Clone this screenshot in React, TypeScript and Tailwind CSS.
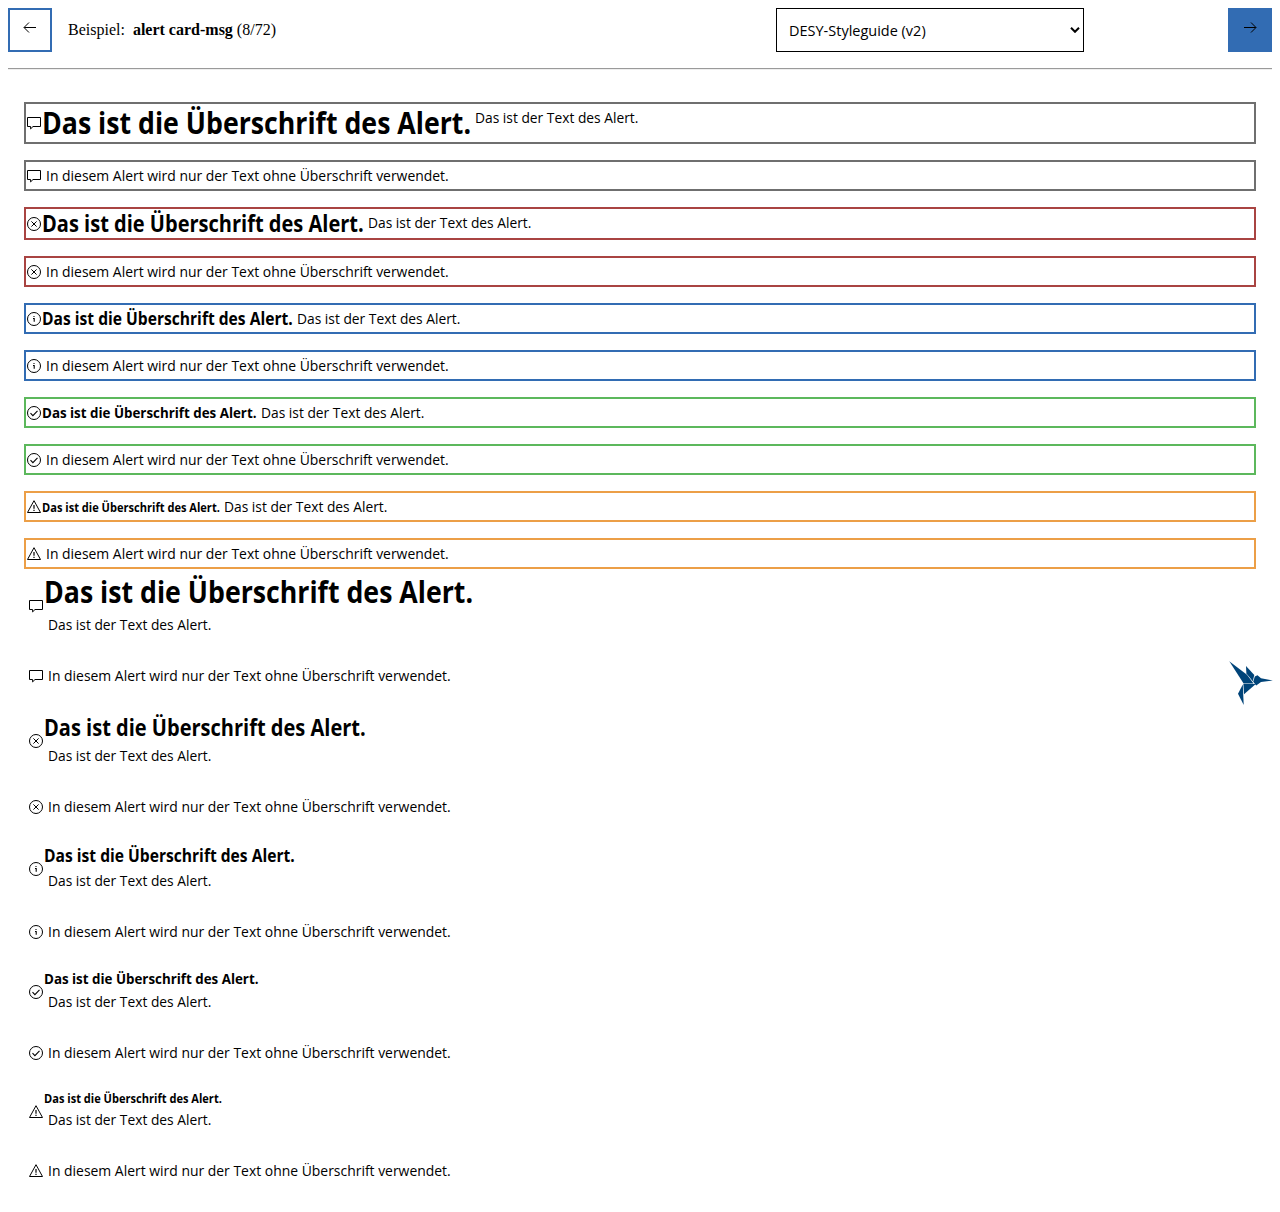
type Kind = 'note' | 'error' | 'info' | 'success' | 'warning';

const HEADING = 'Das ist die Überschrift des Alert.';
const TEXT = 'Das ist der Text des Alert.';
const TEXT_ONLY = 'In diesem Alert wird nur der Text ohne Überschrift verwendet.';

const alerts: {
  kind: Kind;
  border: string;
  height: string;
  size: string;
  line: string;
}[] = [
  { kind: 'note', border: 'border-[#6f6f6f]', height: 'h-[42px]', size: 'text-[30px]', line: 'h-[38.4px] leading-[37px] w-[429px]' },
  { kind: 'error', border: 'border-[#a94442]', height: 'h-[33px]', size: 'text-[22.5px]', line: 'h-[28.8px] leading-[30.6px] w-[322px]' },
  { kind: 'info', border: 'border-[#326cb3]', height: 'h-[31px]', size: 'text-[17.55px]', line: 'h-[22.9px] leading-[22.5px] w-[251px]' },
  { kind: 'success', border: 'border-[#5cb85c]', height: 'h-[31px]', size: 'text-[15px]', line: 'h-[19.2px] leading-[19.2px] w-[214.5px]' },
  { kind: 'warning', border: 'border-[#ec9f47]', height: 'h-[31px]', size: 'text-[12.45px]', line: 'h-[16px] leading-[17.6px] w-[178px]' },
];

function Icon({ kind }: { kind: Kind }) {
  return (
    <svg className="size-4 shrink-0" viewBox="0 0 16 16" fill="none" stroke="black" strokeWidth="1">
      {kind === 'note' && <path d="M1.5 2.5h13v9H7L4.6 13.9v-2.4H1.5z" />}
      {(kind === 'error' || kind === 'info' || kind === 'success') && <circle cx="8" cy="8" r="6.5" />}
      {kind === 'error' && <path d="M5.4 5.4l5.2 5.2M10.6 5.4l-5.2 5.2" />}
      {kind === 'info' && <path d="M7 7.5h1.2v3.3M8 4.9v1.2" strokeWidth="1.1" />}
      {kind === 'success' && <path d="M4.5 8.2l2.4 2.4 4.6-4.7" strokeWidth="1.1" />}
      {kind === 'warning' && (
        <>
          <path d="M8 1.7L14.5 13.5H1.5z" strokeLinejoin="round" />
          <path d="M8 6v3.8M8 10.8v1.2" strokeWidth="1.2" />
        </>
      )}
    </svg>
  );
}

function Heading({ size, line }: { size: string; line: string }) {
  return (
    <strong className={`block shrink-0 whitespace-nowrap font-bold ${size} ${line}`}>
      <span className="inline-block origin-left scale-x-[0.89] align-top">{HEADING}</span>
    </strong>
  );
}

function Body({ children, scale = 'scale-x-[0.913]' }: { children: string; scale?: string }) {
  return (
    <p className="h-[27px] pl-1 leading-[27px] whitespace-nowrap">
      <span className={`inline-block origin-left align-top ${scale}`}>{children}</span>
    </p>
  );
}

function ArrowLeft() {
  return (
    <svg className="size-4" viewBox="0 0 16 16" fill="none" stroke="black" strokeWidth="1">
      <path d="M14 8.5H2.2M7 3.5l-5 5 5 5" />
    </svg>
  );
}

function ArrowRight() {
  return (
    <svg className="size-4" viewBox="0 0 16 16" fill="none" stroke="black" strokeWidth="1">
      <path d="M2 8.5h11.8M9 3.5l5 5-5 5" />
    </svg>
  );
}

function Hummingbird() {
  return (
    <svg className="fixed top-[661px] left-[1229px] h-11 w-11" viewBox="0 0 44 44" fill="#004479">
      <path d="M0.3 0.3L18 13.8 24.6 22.4H14.6z" />
      <path d="M17 5L25.3 14 23.8 20.2 17.4 12.6z" />
      <path d="M24.2 20.8L25.8 15.4 28.5 14.2 32 17.2 43.8 19.4 32 21 27.2 24.4z" />
      <path d="M14.4 22.9H26.8L15 33.2z" />
      <path d="M13.8 23.4L14.7 44 9 32.8z" />
    </svg>
  );
}

export default function App() {
  return (
    <div className="h-[1212px] overflow-hidden bg-white px-2 pt-2 font-['Open_Sans',sans-serif] text-[15.25px] font-[450] text-black">
      <header className="flex h-11">
        <button className="flex size-11 shrink-0 justify-center border-2 border-[#326cb3] pt-[9px]">
          <ArrowLeft />
        </button>
        <div className="ml-4 w-[708px] font-['Liberation_Serif',serif] text-base leading-[44px] font-normal">
          Beispiel:&nbsp; <strong className="font-bold">alert card-msg</strong> (8/72)
        </div>
        <div className="flex h-11 w-[308px] items-center justify-between border border-black pr-[3px] pl-3">
          <span className="origin-left scale-x-[0.95] pt-px">DESY-Styleguide (v2)</span>
          <svg className="h-[6px] w-[10px]" viewBox="0 0 10 6" fill="none" stroke="black" strokeWidth="2">
            <path d="M1 0.8l4 4 4-4" />
          </svg>
        </div>
        <button className="ml-auto flex size-11 justify-center bg-[#326cb3] pt-[11px]">
          <ArrowRight />
        </button>
      </header>
      <hr className="mt-4 h-[2px] border-t border-b border-t-[#9a9a9a] border-b-[#eeeeee]" />

      <main className="px-4 pt-8">
        <section className="flex flex-col gap-4">
          {alerts.map((a) => (
            <div key={a.kind} className="contents">
              <div className={`flex items-center border-2 ${a.border} ${a.height}`}>
                <Icon kind={a.kind} />
                <Heading size={a.size} line={a.line} />
                <div className="self-start">
                  <Body scale="scale-x-[0.905]">{TEXT}</Body>
                </div>
              </div>
              <div className={`flex h-[31px] items-center border-2 ${a.border}`}>
                <Icon kind={a.kind} />
                <Body>{TEXT_ONLY}</Body>
              </div>
            </div>
          ))}
        </section>

        <section className="mt-1 flex flex-col gap-6 pl-1">
          {alerts.map((a) => (
            <div key={a.kind} className="contents">
              <div className="flex items-center">
                <Icon kind={a.kind} />
                <div>
                  <Heading size={a.size} line={a.line} />
                  <Body scale="scale-x-[0.905]">{TEXT}</Body>
                </div>
              </div>
              <div className="flex items-center">
                <Icon kind={a.kind} />
                <Body>{TEXT_ONLY}</Body>
              </div>
            </div>
          ))}
        </section>
      </main>
      <Hummingbird />
    </div>
  );
}
